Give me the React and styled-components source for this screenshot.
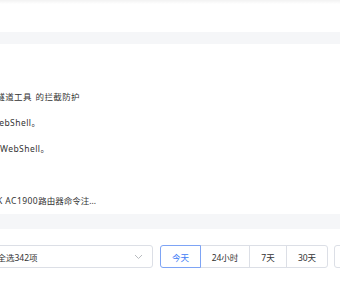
import React from "react";
import styled, { createGlobalStyle } from "styled-components";

const Global = createGlobalStyle`
  html, body { margin: 0; padding: 0; background: #fff; }
  body { font-family: "Noto Sans", "Noto Sans CJK SC", sans-serif; overflow: hidden; }
`;

const Page = styled.div`
  width: 340px;
  height: 286px;
  display: flex;
  flex-direction: column;
  overflow: hidden;
  background: #fff;
`;

const HeaderShadow = styled.div`
  height: 4px;
  background: linear-gradient(rgba(0, 0, 0, 0.05), rgba(0, 0, 0, 0));
`;

const Spacer = styled.div`
  height: ${(p) => p.$h}px;
`;

const Band = styled.div`
  height: ${(p) => p.$h}px;
  background: #f5f6f8;
`;

const List = styled.div`
  display: flex;
  flex-direction: column;
  padding: 39px 0 1px;
`;

const Row = styled.div`
  height: 26px;
  display: flex;
  align-items: center;
  justify-content: flex-end;
  width: ${(p) => p.$end}px;
  white-space: nowrap;
`;

const RowText = styled.span`
  flex-shrink: 0;
  font-size: 8.5px;
  color: #333;
  word-spacing: 1px;
  letter-spacing: ${(p) => p.$track || 0}px;
`;

const Latin = styled.span`
  letter-spacing: 0.45px;
`;

const Filters = styled.div`
  display: flex;
  align-items: center;
  padding-top: 16px;
  gap: 7px;
`;

const Select = styled.div`
  width: 165px;
  margin-left: -12px;
  height: 23px;
  box-sizing: border-box;
  border: 1px solid #dcdfe6;
  border-radius: 3px;
  display: flex;
  align-items: center;
  justify-content: space-between;
  padding: 0 9px 0 0;
  flex-shrink: 0;
`;

const SelectText = styled.span`
  font-size: 8.5px;
  color: #333;
  white-space: nowrap;
`;

const Segments = styled.div`
  display: flex;
  height: 23px;
  flex-shrink: 0;
`;

const Seg = styled.div`
  width: ${(p) => p.$w}px;
  box-sizing: border-box;
  display: flex;
  align-items: center;
  justify-content: center;
  font-size: 8.5px;
  color: ${(p) => (p.$active ? "#3d7bf6" : "#333")};
  border: 1px solid ${(p) => (p.$active ? "#7ea4f5" : "#dcdfe6")};
  margin-left: ${(p) => (p.$first ? 0 : -1)}px;
  position: relative;
  z-index: ${(p) => (p.$active ? 1 : 0)};
  border-radius: ${(p) =>
    p.$first ? "3px 0 0 3px" : p.$last ? "0 3px 3px 0" : "0"};
`;

const NextBox = styled.div`
  width: 30px;
  height: 23px;
  box-sizing: border-box;
  border: 1px solid #dcdfe6;
  border-radius: 3px;
  margin-left: -1px;
  flex-shrink: 0;
`;

const Chevron = () => (
  <svg width="9" height="6" viewBox="0 0 9 6" fill="none">
    <path d="M1 1l3.5 3.5L8 1" stroke="#b0b3b8" strokeWidth="0.9" />
  </svg>
);

export default function App() {
  return (
    <Page>
      <Global />
      <HeaderShadow />
      <Spacer $h={28} />
      <Band $h={12} />
      <List>
        <Row $end={80}>
          <RowText $track={0.4}>绕过隧道工具 的拦截防护</RowText>
        </Row>
        <Row $end={40}>
          <RowText>上传<Latin>WebShell</Latin>。</RowText>
        </Row>
        <Row $end={49}>
          <RowText>件、<Latin>WebShell</Latin>。</RowText>
        </Row>
        <Row $end={40}>
          <RowText></RowText>
        </Row>
        <Row $end={96}>
          <RowText>TOTOLINK <Latin>AC1900</Latin>路由器命令注...</RowText>
        </Row>
      </List>
      <Band $h={15} />
      <Filters>
        <Select>
          <SelectText>已全选342项</SelectText>
          <Chevron />
        </Select>
        <Segments>
          <Seg $w={41} $active $first>今天</Seg>
          <Seg $w={50}>24小时</Seg>
          <Seg $w={38}>7天</Seg>
          <Seg $w={42} $last>30天</Seg>
        </Segments>
        <NextBox />
      </Filters>
    </Page>
  );
}
